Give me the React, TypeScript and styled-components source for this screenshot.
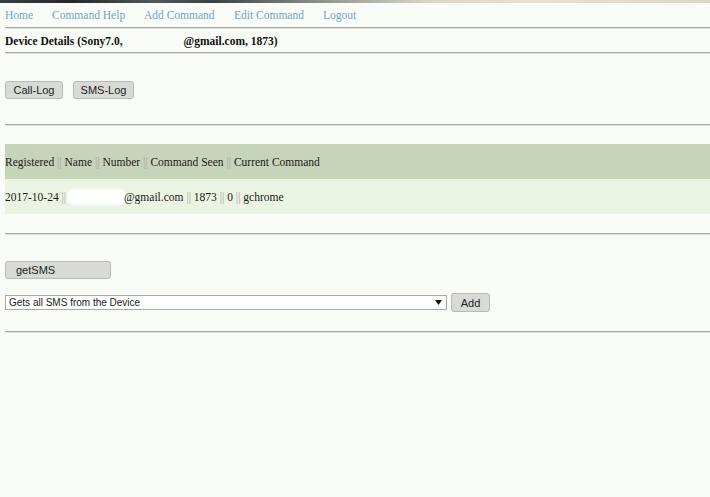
import React from "react";
import styled, { createGlobalStyle } from "styled-components";

const Global = createGlobalStyle`
  html, body { margin: 0; padding: 0; background: #f9fbf6; }
  body { font-family: "Liberation Serif", "Times New Roman", serif; color: #111; }
`;

const Strip = styled.div`
  height: 3px;
  background: linear-gradient(90deg, #3a3d40 0%, #26282b 10%, #55585a 22%, #3d4042 30%, #8d918c 45%, #d8d6c4 60%, #e6e3cf 75%, #d9d8c2 100%);
`;

const Page = styled.div`
  padding-left: 5px;
`;

const Nav = styled.nav`
  display: flex;
  align-items: center;
  height: 24px;
`;

const NavLink = styled.a<{ $w: number }>`
  width: ${(p) => p.$w}px;
  font-size: 11.5px;
  color: #6ea6c6;
  text-decoration: none;
  white-space: nowrap;
`;

const Rule = styled.div`
  height: 0;
  border-top: 1px solid #a9aba7;
  border-bottom: 1px solid #dfe1dc;
`;

const Title = styled.div`
  height: 23px;
  display: flex;
  align-items: center;
  font-size: 11.5px;
  font-weight: bold;
  white-space: pre;
`;

const Gap = styled.span<{ $w: number }>`
  display: inline-block;
  width: ${(p) => p.$w}px;
`;

const ButtonRow = styled.div<{ $top: number; $bottom: number }>`
  display: flex;
  align-items: center;
  gap: 10px;
  margin-top: ${(p) => p.$top}px;
  margin-bottom: ${(p) => p.$bottom}px;
`;

const Btn = styled.button<{ $w: number; $h?: number; $align?: string }>`
  width: ${(p) => p.$w}px;
  height: ${(p) => p.$h ?? 18}px;
  padding: 0 ${(p) => (p.$align === "left" ? "10px" : "0")};
  text-align: ${(p) => p.$align ?? "center"};
  background: #d8dbd5;
  border: 1px solid #b8bbb4;
  border-radius: 3px;
  font-family: "Liberation Sans", Arial, sans-serif;
  font-size: 11px;
  color: #222;
  box-sizing: border-box;
`;

const Band = styled.div<{ $bg: string }>`
  background: ${(p) => p.$bg};
  height: 35px;
  display: flex;
  align-items: center;
  font-size: 11.5px;
  color: #1a1a1a;
  white-space: pre;
`;

const Sep = styled.span`
  color: #a3a79f;
`;

const Blur = styled.span`
  display: inline-block;
  width: 55px;
  height: 12px;
  background: #ffffff;
  border-radius: 5px;
  box-shadow: 0 0 3px 2px #fff;
  vertical-align: middle;
`;

const Table = styled.div`
  margin-top: 18px;
  margin-bottom: 19px;
`;

const FormRow = styled.div`
  display: flex;
  align-items: center;
  gap: 4px;
  margin-top: 14px;
  margin-bottom: 19px;
`;

const Select = styled.div`
  width: 442px;
  height: 15px;
  box-sizing: border-box;
  border: 1px solid #a9aba7;
  background: #fff;
  display: flex;
  align-items: center;
  justify-content: space-between;
  padding: 0 4px 0 3px;
  font-family: "Liberation Sans", Arial, sans-serif;
  font-size: 10px;
  color: #222;
`;

const S = () => <Sep> || </Sep>;

export default function App() {
  return (
    <>
      <Global />
      <Strip />
      <Page>
        <Nav>
          <NavLink $w={47}>Home</NavLink>
          <NavLink $w={92}>Command Help</NavLink>
          <NavLink $w={90}>Add Command</NavLink>
          <NavLink $w={89}>Edit Command</NavLink>
          <NavLink $w={40}>Logout</NavLink>
        </Nav>
        <Rule />
        <Title>
          Device Details (Sony7.0,<Gap $w={61} />@gmail.com, 1873)
        </Title>
        <Rule />
        <ButtonRow $top={27} $bottom={25}>
          <Btn $w={58}>Call-Log</Btn>
          <Btn $w={61}>SMS-Log</Btn>
        </ButtonRow>
        <Rule />
        <Table>
          <Band $bg="#c6d4b9">
            Registered<S />Name<S />Number<S />Command Seen<S />Current Command
          </Band>
          <Band $bg="#ebf4e3">
            2017-10-24<S /><Blur />@gmail.com<S />1873<S />0<S />gchrome
          </Band>
        </Table>
        <Rule />
        <ButtonRow $top={26} $bottom={0}>
          <Btn $w={106} $align="left">getSMS</Btn>
        </ButtonRow>
        <FormRow>
          <Select>
            <span>Gets all SMS from the Device</span>
            <svg width="7" height="5" viewBox="0 0 7 5">
              <path d="M0 0 L7 0 L3.5 5 Z" fill="#111" />
            </svg>
          </Select>
          <Btn $w={39} $h={19}>Add</Btn>
        </FormRow>
        <Rule />
      </Page>
    </>
  );
}
